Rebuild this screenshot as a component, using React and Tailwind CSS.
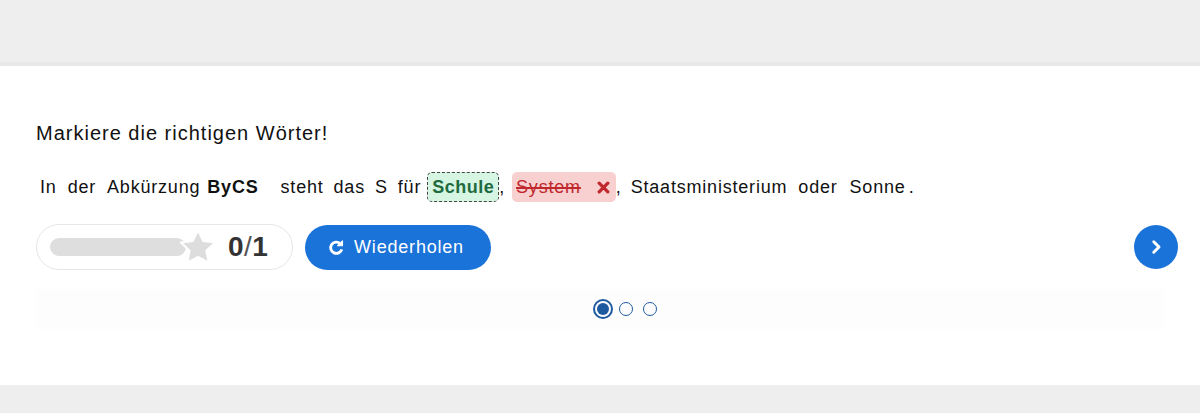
import React from "react";

function Star() {
  return (
    <svg width="40" height="40" viewBox="0 0 24 24" className="-ml-[8px] shrink-0">
      <path d="M12 1.8l3.1 6.6 7.2.9-5.3 5 1.4 7.1L12 17.9l-6.4 3.5 1.4-7.1-5.3-5 7.2-.9z" fill="#dddddd" stroke="#ffffff" strokeWidth="1.2" strokeLinejoin="round" />
    </svg>
  );
}

function Redo() {
  return (
    <svg width="17" height="17" viewBox="0 0 24 24" fill="none" stroke="white" strokeWidth="4" strokeLinecap="butt">
      <path d="M19.5 14.5A8 8 0 1 1 17.2 6.4" />
      <path d="M20.5 2.5v7h-7z" fill="white" stroke="white" strokeWidth="1.5" strokeLinejoin="round" />
    </svg>
  );
}

export default function App() {
  const font = { fontFamily: '"Liberation Sans", Arial, sans-serif' };
  return (
    <div className="w-[1200px] h-[413px] bg-[#eeeeee] flex flex-col" style={font}>
      <div className="h-[62px] bg-[#eeeeee]" />
      <div className="h-[4px] bg-[#e8e8e8]" />
      <div className="h-[319px] bg-white px-[36px] pt-[55px] flex flex-col">
        <div className="text-[20px] leading-[24px] text-[#111] tracking-[1px]">Markiere die richtigen Wörter!</div>
        <div className="mt-[26px] flex items-center h-[32px] text-[18px] text-[#111] pl-[4px] tracking-[0.8px]">
          <span>In</span>
          <span className="ml-[11px]">der</span>
          <span className="ml-[11px]">Abkürzung</span>
          <span className="ml-[7px] font-bold">ByCS</span>
          <span className="ml-[22px]">steht</span>
          <span className="ml-[10px]">das</span>
          <span className="ml-[10px]">S</span>
          <span className="ml-[10px]">für</span>
          <span className="ml-[6px] h-[30px] px-[4px] flex items-center rounded-[5px] border border-dashed border-[#444] bg-[#d6f5e3] text-[#1f6b40] font-bold tracking-[0.5px]">Schule</span>
          <span>,</span>
          <span className="ml-[7px] h-[30px] pl-[4px] pr-[6px] flex items-center rounded-[5px] bg-[#f8d0d0] text-[#c0282d]">
            <span className="line-through decoration-[1.5px]">System</span>
            <svg width="13" height="13" viewBox="0 0 12 12" className="ml-[16px]">
              <path d="M2 2l8 8M10 2l-8 8" stroke="#c0282d" strokeWidth="3" strokeLinecap="round" />
            </svg>
          </span>
          <span>,</span>
          <span className="ml-[9px]">Staatsministerium</span>
          <span className="ml-[11px]">oder</span>
          <span className="ml-[12px]">Sonne</span>
          <span className="ml-[3px]">.</span>
        </div>
        <div className="mt-[21px] flex items-center">
          <div className="h-[46px] w-[257px] rounded-full border border-[#e6e6e6] flex items-center pl-[13px]">
            <div className="w-[136px] h-[18px] rounded-full bg-[#dedede]" />
            <Star />
            <span className="ml-[10px] text-[28px] leading-[32px] font-bold text-[#333] tracking-[0.5px]">0<span className="font-normal text-[#555]">/</span>1</span>
          </div>
          <button className="ml-[12px] h-[45px] w-[186px] rounded-full bg-[#1a73d9] flex items-center justify-center gap-[9px] text-white text-[18px] tracking-[0.8px] pr-[4px]">
            <Redo />
            <span>Wiederholen</span>
          </button>
          <div className="flex-1" />
          <button className="w-[44px] h-[44px] rounded-full bg-[#1a73d9] flex items-center justify-center mr-[-14px]">
            <svg width="18" height="18" viewBox="0 0 24 24" fill="none" stroke="white" strokeWidth="4" strokeLinecap="round" strokeLinejoin="round">
              <path d="M9 5l7 7-7 7" />
            </svg>
          </button>
        </div>
        <div className="mt-[19px] h-[40px] bg-[#fdfdfd] flex items-center justify-center gap-[6px] pl-[50px]">
          <span className="w-[20px] h-[20px] rounded-full border-[2px] border-[#1e5aa0] flex items-center justify-center">
            <span className="w-[12px] h-[12px] rounded-full bg-[#1e5aa0]" />
          </span>
          <span className="w-[14px] h-[14px] rounded-full border-[1.5px] border-[#1e5aa0]" />
          <span className="ml-[4px] w-[14px] h-[14px] rounded-full border-[1.5px] border-[#1e5aa0]" />
        </div>
      </div>
    </div>
  );
}
